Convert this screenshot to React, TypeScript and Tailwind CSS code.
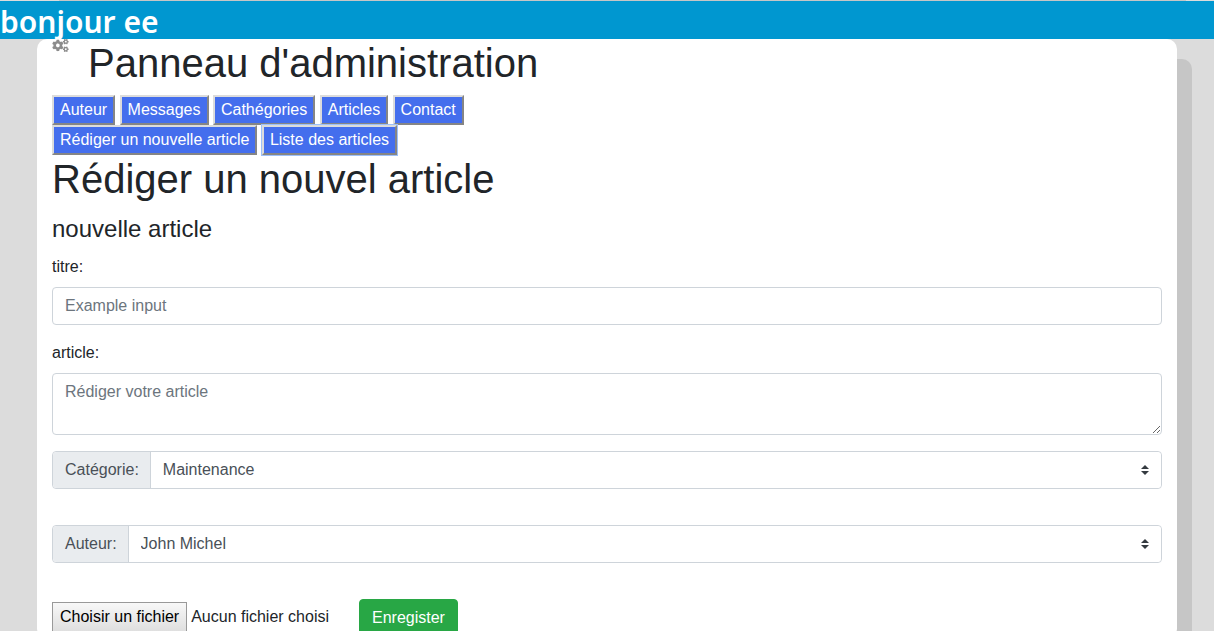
import { useState, type ReactNode } from "react";
import { FaCogs } from "react-icons/fa";

const sections = ["Auteur", "Messages", "Cathégories", "Articles", "Contact"];

function NavButton({ children, active = false }: { children: ReactNode; active?: boolean }) {
  return (
    <button
      type="button"
      className={
        "border-2 border-t-[#dcdcdc] border-r-[#858585] border-b-[#858585] border-l-[#dcdcdc] bg-[#446eed] px-1.5 py-px align-top leading-6 text-white " +
        (active ? "ring-1 ring-[#9dc0fa]" : "")
      }
    >
      {children}
    </button>
  );
}

function SelectRow({ id, label, options }: { id: string; label: string; options: string[] }) {
  return (
    <div className="flex h-[38px] rounded-sm border border-[#ced4da] text-[#495057]">
      <label
        htmlFor={id}
        className="flex items-center rounded-l-sm border-r border-[#ced4da] bg-[#e9ecef] pr-[11px] pl-3"
      >
        {label}
      </label>
      <div className="relative flex-1">
        <select
          id={id}
          className="h-full w-full appearance-none rounded-r-sm bg-white pr-7 pl-3 outline-none"
        >
          {options.map((option) => (
            <option key={option}>{option}</option>
          ))}
        </select>
        <svg
          viewBox="0 0 4 5"
          className="pointer-events-none absolute top-1/2 right-3 h-2.5 w-2 -translate-y-1/2 fill-[#343a40]"
          aria-hidden="true"
        >
          <path d="M2 0L0 2h4zm0 5L0 3h4z" />
        </svg>
      </div>
    </div>
  );
}

export default function App() {
  const [fileName, setFileName] = useState("Aucun fichier choisi");

  return (
    <div className="min-h-screen overflow-hidden bg-[#dcdcdc] pb-10 font-['Liberation_Sans',Arial,sans-serif] text-base text-[#212529]">
      <div className="mr-7 ml-[59px] h-px bg-[#c6c6c6]" />
      <header className="h-[38px] bg-[#0097d0]">
        <p className="font-['Noto_Sans','Open_Sans',sans-serif] text-[30px] leading-[42px] font-semibold text-white">
          bonjour ee
        </p>
      </header>

      <main className="mx-[37px] rounded-[10px] bg-white px-[15px] pb-[2px] shadow-[15px_20px_0_0_#c6c6c6]">
        <div className="flex h-14 items-start">
          <FaCogs className="mr-[19px] h-[13px] w-[17px] text-[#8c8c8c]" aria-hidden="true" />
          <h1 className="text-[40px] leading-12">Panneau d'administration</h1>
        </div>

        <nav className="leading-[30px]">
          {sections.map((name) => (
            <span key={name}>
              <NavButton>{name}</NavButton>{" "}
            </span>
          ))}
        </nav>
        <nav className="leading-[30px]">
          <NavButton>Rédiger un nouvelle article</NavButton>{" "}
          <NavButton active>Liste des articles</NavButton>
        </nav>

        <h1 className="text-[40px] leading-12">Rédiger un nouvel article</h1>

        <form onSubmit={(event) => event.preventDefault()}>
          <h2 className="mt-3 mb-3 text-2xl leading-7">nouvelle article</h2>

          <label htmlFor="titre" className="mb-2 block">
            titre:
          </label>
          <input
            id="titre"
            type="text"
            placeholder="Example input"
            className="mb-4 block h-[38px] w-full rounded-sm border border-[#ced4da] bg-white px-3 placeholder:text-[#6c757d]"
          />

          <label htmlFor="article" className="mb-2 block">
            article:
          </label>
          <textarea
            id="article"
            rows={2}
            placeholder="Rédiger votre article"
            className="mb-4 block h-[62px] w-full resize-y rounded-sm border border-[#ced4da] bg-white px-3 py-1.5 placeholder:text-[#6c757d]"
          />

          <div className="space-y-9">
            <SelectRow id="categorie" label="Catégorie:" options={["Maintenance"]} />
            <SelectRow id="auteur" label="Auteur:" options={["John Michel"]} />

            <div className="flex items-center">
              <input
                id="fichier"
                type="file"
                className="sr-only"
                onChange={(event) =>
                  setFileName(event.target.files?.[0]?.name ?? "Aucun fichier choisi")
                }
              />
              <label
                htmlFor="fichier"
                className="border border-[#999999] bg-linear-to-b from-[#f8f8f8] to-[#dddddd] px-[7px] pt-0.5 pb-1 text-black"
              >
                Choisir un fichier
              </label>
              <span className="ml-1 pb-0.5">{fileName}</span>
              <button
                type="submit"
                className="ml-[30px] h-[38px] rounded-sm border border-[#28a745] bg-[#28a745] px-3 text-white"
              >
                Enregister
              </button>
            </div>
          </div>
        </form>
      </main>
    </div>
  );
}
